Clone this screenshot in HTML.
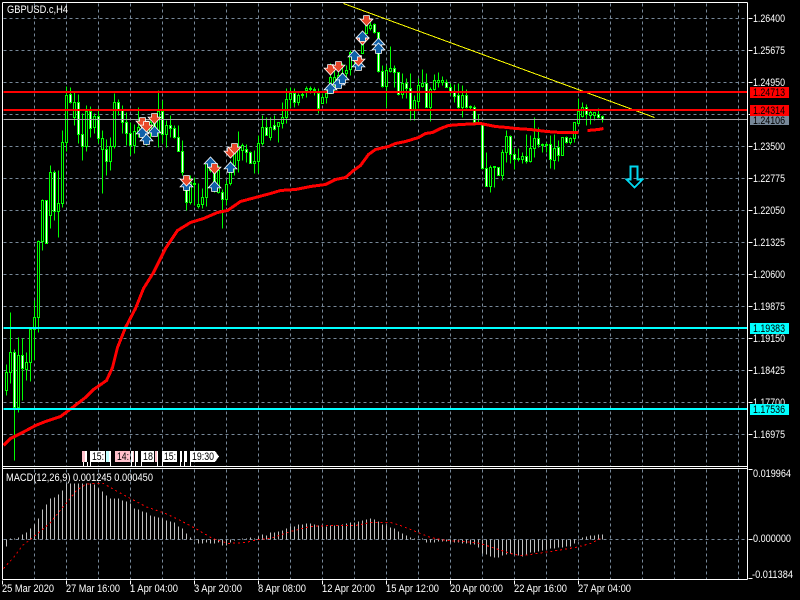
<!DOCTYPE html>
<html><head><meta charset="utf-8"><style>
html,body{margin:0;padding:0;background:#000;width:800px;height:600px;overflow:hidden}
svg{display:block}
text{font-family:"Liberation Sans",sans-serif;font-size:11px;fill:#fff}
text.k{fill:#000}
</style></head><body>
<svg width="800" height="600" viewBox="0 0 800 600" xmlns="http://www.w3.org/2000/svg">
<rect width="800" height="600" fill="#000"/>
<g transform="translate(.5 .5)" shape-rendering="crispEdges" fill="none">
<path stroke="#778899" stroke-dasharray="3 3" d="M34 3V466M66 3V466M98 3V466M130 3V466M162 3V466M194 3V466M226 3V466M258 3V466M290 3V466M322 3V466M354 3V466M386 3V466M418 3V466M450 3V466M482 3V466M514 3V466M546 3V466M578 3V466M610 3V466M642 3V466M674 3V466M706 3V466M738 3V466
M34 469V579M66 469V579M98 469V579M130 469V579M162 469V579M194 469V579M226 469V579M258 469V579M290 469V579M322 469V579M354 469V579M386 469V579M418 469V579M450 469V579M482 469V579M514 469V579M546 469V579M578 469V579M610 469V579M642 469V579M674 469V579M706 469V579M738 469V579
M3 18H747M3 50H747M3 82H747M3 114H747M3 146H747M3 178H747M3 210H747M3 242H747M3 274H747M3 306H747M3 338H747M3 370H747M3 402H747M3 434H747M3 539H747"/>
<path stroke="#00ff00" d="M6 364V395M10 312V383M14 349V460M18 337V412M22 338V400M26 352V380M30 329V381M34 300V360M38 240V332M42 199V250M46 200V243M50 165V228M54 170V220M58 170V237M62 130V207M66 86V151M70 87V103M74 92V125M78 94V143M82 113V160M86 105V151M90 106V137M94 113V133M98 108V143M102 130V193M106 139V175M110 137V170M114 93V148M118 99V115M122 105V133M126 112V145M130 122V155M134 124V153M138 107V137M142 120V140M146 125V145M150 120V140M154 115V135M158 90V147M162 100V143M166 120V147M170 115V137M174 125V138M178 125V151M182 140V175M186 177V210M190 175V204M194 177V205M198 183V208M202 188V208M206 163V206M210 160V172M214 170V192M218 165V193M222 189V228M226 180V205M230 160V185M234 145V175M238 131V172M242 143V160M246 144V162M250 151V163M254 150V173M258 135V173M262 115V145M266 117V135M270 117V140M274 115V130M278 122V142M282 102V128M286 88V123M290 87V107M294 88V107M298 93V105M302 92V98M306 86V97M310 86V93M314 87V95M318 88V113M322 93V103M326 88V103M330 63V93M334 68V92M338 72V83M342 63V82M346 65V78M350 50V75M354 52V65M358 57V68M362 42V53M366 15V33M370 22V30M374 23V33M378 32V72M382 65V87M386 65V107M390 46V72M394 65V87M398 72V95M402 73V98M406 78V98M410 73V120M414 95V120M418 78V108M422 69V87M426 73V107M430 87V121M434 74V90M438 72V87M442 76V85M446 79V87M450 83V95M454 84V102M458 83V108M462 85V117M466 89V108M470 105V110M474 105V122M478 114V123M482 123V169M486 152V186M490 165V192M494 166V187M498 167V175M502 149V180M506 130V162M510 135V163M514 148V169M518 148V161M522 152V163M526 134V163M530 135V162M534 117V157M538 127V147M542 143V152M546 142V152M550 135V168M554 134V169M558 140V161M562 137V155M566 136V143M570 137V144M574 122V142M578 98V125M582 102V117M586 104V125M590 109V124M594 112V120M598 108V118M602 115V122"/>
<path stroke="#00ff00" fill="#000" d="M5 372h2v18h-2zM9 352h2v20h-2zM17 355h2v52h-2zM25 362h2v7h-2zM29 329h2v33h-2zM33 317h2v12h-2zM37 241h2v76h-2zM41 200h2v41h-2zM49 172h2v43h-2zM57 203h2v8h-2zM61 142h2v61h-2zM65 95h2v47h-2zM73 102h2v15h-2zM85 111h2v35h-2zM93 116h2v11h-2zM101 138h2v11h-2zM109 146h2v15h-2zM113 102h2v44h-2zM133 131h2v14h-2zM137 127h2v4h-2zM141 123h2v8h-2zM149 122h2v8h-2zM157 111h2v19h-2zM165 125h2v9h-2zM189 182h2v20h-2zM193 183h2v1h-2zM197 204h2v2h-2zM201 197h2v7h-2zM205 163h2v34h-2zM217 170h2v22h-2zM225 184h2v15h-2zM229 167h2v16h-2zM233 150h2v15h-2zM237 148h2v12h-2zM241 145h2v5h-2zM253 161h2v2h-2zM257 143h2v18h-2zM261 127h2v16h-2zM269 127h2v10h-2zM277 122h2v4h-2zM281 117h2v6h-2zM285 99h2v18h-2zM289 93h2v6h-2zM297 95h2v7h-2zM301 94h2v1h-2zM305 88h2v2h-2zM309 88h2v1h-2zM313 89h2v1h-2zM321 97h2v6h-2zM325 93h2v4h-2zM329 77h2v16h-2zM333 77h2v6h-2zM337 75h2v7h-2zM341 73h2v5h-2zM345 70h2v3h-2zM349 52h2v17h-2zM361 33h2v20h-2zM365 23h2v10h-2zM369 25h2v3h-2zM385 70h2v16h-2zM389 68h2v3h-2zM401 83h2v11h-2zM413 100h2v9h-2zM417 85h2v16h-2zM421 83h2v3h-2zM429 89h2v18h-2zM433 80h2v9h-2zM437 80h2v2h-2zM441 80h2v2h-2zM461 95h2v12h-2zM469 106h2v1h-2zM489 167h2v19h-2zM493 166h2v1h-2zM501 152h2v23h-2zM505 136h2v16h-2zM517 158h2v1h-2zM521 156h2v3h-2zM529 148h2v13h-2zM533 138h2v10h-2zM541 144h2v1h-2zM545 144h2v1h-2zM553 148h2v12h-2zM561 137h2v18h-2zM569 138h2v4h-2zM573 122h2v16h-2zM577 111h2v12h-2zM581 107h2v9h-2zM589 112h2v3h-2zM593 112h2v3h-2z"/>
<path stroke="#00ff00" fill="#fff" d="M13 352h2v55h-2zM21 355h2v13h-2zM45 200h2v43h-2zM53 172h2v39h-2zM69 94h2v8h-2zM77 102h2v32h-2zM81 134h2v12h-2zM89 111h2v17h-2zM97 116h2v22h-2zM105 149h2v12h-2zM117 102h2v7h-2zM121 109h2v13h-2zM125 122h2v11h-2zM129 133h2v12h-2zM145 125h2v6h-2zM153 118h2v10h-2zM161 111h2v23h-2zM169 125h2v3h-2zM173 128h2v9h-2zM177 137h2v14h-2zM181 151h2v21h-2zM185 180h2v22h-2zM209 163h2v7h-2zM213 172h2v14h-2zM221 192h2v7h-2zM245 149h2v3h-2zM249 152h2v11h-2zM265 127h2v8h-2zM273 125h2v4h-2zM293 93h2v9h-2zM317 93h2v15h-2zM353 53h2v7h-2zM357 60h2v5h-2zM373 24h2v8h-2zM377 32h2v39h-2zM381 71h2v15h-2zM393 68h2v4h-2zM397 72h2v22h-2zM405 83h2v5h-2zM409 88h2v21h-2zM425 83h2v24h-2zM445 82h2v5h-2zM449 87h2v4h-2zM453 91h2v5h-2zM457 95h2v12h-2zM465 95h2v12h-2zM473 107h2v15h-2zM481 124h2v44h-2zM485 168h2v18h-2zM497 167h2v8h-2zM509 136h2v18h-2zM513 154h2v5h-2zM525 156h2v5h-2zM537 138h2v6h-2zM549 144h2v15h-2zM557 147h2v8h-2zM565 137h2v5h-2zM585 107h2v7h-2zM597 114h2v3h-2zM601 116h2v3h-2z"/>
<path stroke="#ff0000" stroke-width="3" stroke-linejoin="round" d="M3 445L10 438L22 432L35 425L45 421L60 416L72 407L85 397L93 389L106 380L112 367L117 347L125 327L135 308L143 288L153 272L165 248L177 230L190 222L203 218L217 212L227 210L240 201L255 197L270 193L280 190L295 189L310 186L325 184L335 179L345 177L353 170L360 165L368 154L375 149L388 146L395 143L405 141L418 137L425 133L432 132L440 128L448 125L460 124L480 123L485 124L495 126L507 127L515 128L530 129L546 131L560 132L578 132M587 130L598 129L603 128"/>
<path stroke="#ffff00" d="M343 3L654 117"/>
<path stroke="#ff0000" stroke-width="2" d="M3 91.500H747M3 109.500H747"/>
<path stroke="#a8a8a8" d="M3 119H747"/>
<path stroke="#00ffff" stroke-width="2" d="M3 327.500H747M3 408.500H747"/>
<path stroke="#00d8f0" stroke-width="2" d="M630 166H637V179H642L634 187L626 179H630Z"/>
<path stroke="#c0c0c0" d="M6 539V546M10 539V538M14 539V538M18 539V537M22 539V534M26 539V532M30 539V528M34 539V524M38 539V518M42 539V509M46 539V504M50 539V498M54 539V497M58 539V494M62 539V490M66 539V483M70 539V483M74 539V483M78 539V483M82 539V483M86 539V483M90 539V483M94 539V484M98 539V488M102 539V491M106 539V495M110 539V498M114 539V498M118 539V498M122 539V500M126 539V501M130 539V503M134 539V508M138 539V509M142 539V511M146 539V512M150 539V515M154 539V516M158 539V517M162 539V518M166 539V520M170 539V521M174 539V522M178 539V526M182 539V528M186 539V533M190 539V537M194 539V540M198 539V543M202 539V543M206 539V542M210 539V543M214 539V543M218 539V542M222 539V545M226 539V545M230 539V542M234 539V540M238 539V539M242 539V538M246 539V538M250 539V537M254 539V538M258 539V536M262 539V534M266 539V535M270 539V532M274 539V532M278 539V531M282 539V530M286 539V528M290 539V526M294 539V526M298 539V524M302 539V524M306 539V523M310 539V523M314 539V524M318 539V525M322 539V526M326 539V526M330 539V525M334 539V525M338 539V525M342 539V524M346 539V523M350 539V522M354 539V522M358 539V521M362 539V520M366 539V519M370 539V518M374 539V519M378 539V521M382 539V524M386 539V525M390 539V527M394 539V528M398 539V531M402 539V533M406 539V535M410 539V537M414 539V538M422 539V538M426 539V542M430 539V542M434 539V542M438 539V541M442 539V541M446 539V541M450 539V542M454 539V542M458 539V542M462 539V543M466 539V543M470 539V544M474 539V544M478 539V547M482 539V553M486 539V554M490 539V556M494 539V557M498 539V557M502 539V555M506 539V554M510 539V553M514 539V554M518 539V555M522 539V556M526 539V554M530 539V552M534 539V552M538 539V551M542 539V550M546 539V549M550 539V548M554 539V548M558 539V547M562 539V547M566 539V546M570 539V546M574 539V543M578 539V540M582 539V537M586 539V536M590 539V535M594 539V535M598 539V534M602 539V534"/>
<path stroke="#ff0000" stroke-dasharray="2 3" d="M3 568L13 557L22 545L30 539L42 529L50 522L58 512L68 500L76 490L85 484L92 483L103 483L115 490L130 498L145 506L165 513L180 520L195 528L212 538L228 543L245 542L258 539L270 538L290 531L310 526L330 525L355 525L370 522L390 522L400 525L415 531L430 537L445 540L465 541L480 543L495 548L510 553L520 555L530 554L550 551L575 547L590 543L600 538"/>
<path stroke="#ffffff" d="M2 2H747M2 2V579M747 2V579M2 466H747M2 468H747M2 579H747
M748 18H752M748 50H752M748 82H752M748 114H752M748 146H752M748 178H752M748 210H752M748 242H752M748 274H752M748 306H752M748 338H752M748 370H752M748 402H752M748 434H752M748 469H752M748 539H752M748 578H752
M2 580V584M66 580V584M130 580V584M194 580V584M258 580V584M322 580V584M386 580V584M450 580V584M514 580V584M578 580V584"/>
</g>
<defs>
<path id="d" d="M-2.500-4.500H2.500V-1H5.500L0 5L-5.500-1H-2.500Z" fill="#e8482a" stroke="#fff" stroke-width="1.600" paint-order="stroke"/>
<path id="u" d="M-2.500 4.500H2.500V1H5.500L0-5L-5.500 1H-2.500Z" fill="#1060a8" stroke="#fff" stroke-width="1.600" paint-order="stroke"/>
</defs>
<g>
<use href="#u" x="142.500" y="132.500"/><use href="#u" x="146.500" y="139.500"/><use href="#u" x="154.500" y="131.500"/>
<use href="#d" x="142.500" y="122.500"/><use href="#d" x="146.500" y="126.500"/><use href="#d" x="154.500" y="118.500"/>
<use href="#u" x="186.500" y="185.500"/><use href="#d" x="186.500" y="180.500"/>
<use href="#u" x="210.500" y="162.500"/><use href="#d" x="214.500" y="168.500"/><use href="#u" x="214.500" y="186.500"/>
<use href="#u" x="230.500" y="167.500"/><use href="#d" x="230.500" y="152.500"/><use href="#d" x="234.500" y="148.500"/>
<use href="#d" x="330.500" y="69.500"/><use href="#d" x="338.500" y="66.500"/>
<use href="#u" x="330.500" y="88.500"/><use href="#u" x="338.500" y="83.500"/><use href="#u" x="342.500" y="78.500"/>
<use href="#u" x="358.500" y="65.500"/><use href="#d" x="358.500" y="60.500"/><use href="#u" x="354.500" y="55.500"/>
<use href="#d" x="362.500" y="39.500"/><use href="#u" x="362.500" y="36.500"/><use href="#d" x="366.500" y="20.500"/>
<use href="#u" x="378.500" y="43.500"/><use href="#u" x="378.500" y="48.500"/>
</g>
<rect x="750" y="87" width="39" height="11" fill="#ff0000"/>
<rect x="750" y="105" width="39" height="11" fill="#ff0000"/>
<rect x="750" y="116" width="39" height="9" fill="#778899"/>
<rect x="750" y="323" width="39" height="11" fill="#00ffff"/>
<text x="753" y="22" textLength="32" lengthAdjust="spacingAndGlyphs">1.26400</text>
<text x="753" y="54" textLength="32" lengthAdjust="spacingAndGlyphs">1.25675</text>
<text x="753" y="86" textLength="32" lengthAdjust="spacingAndGlyphs">1.24950</text>
<text x="753" y="150" textLength="32" lengthAdjust="spacingAndGlyphs">1.23500</text>
<text x="753" y="182" textLength="32" lengthAdjust="spacingAndGlyphs">1.22775</text>
<text x="753" y="214" textLength="32" lengthAdjust="spacingAndGlyphs">1.22050</text>
<text x="753" y="246" textLength="32" lengthAdjust="spacingAndGlyphs">1.21325</text>
<text x="753" y="278" textLength="32" lengthAdjust="spacingAndGlyphs">1.20600</text>
<text x="753" y="310" textLength="32" lengthAdjust="spacingAndGlyphs">1.19875</text>
<text x="753" y="342" textLength="32" lengthAdjust="spacingAndGlyphs">1.19150</text>
<text x="753" y="374" textLength="32" lengthAdjust="spacingAndGlyphs">1.18425</text>
<text x="753" y="406" textLength="32" lengthAdjust="spacingAndGlyphs">1.17700</text>
<text x="753" y="438" textLength="32" lengthAdjust="spacingAndGlyphs">1.16975</text>
<rect x="750" y="404" width="39" height="11" fill="#00ffff"/>
<text class="k" x="753" y="96" textLength="32" lengthAdjust="spacingAndGlyphs">1.24713</text>
<text class="k" x="753" y="114" textLength="32" lengthAdjust="spacingAndGlyphs">1.24314</text>
<text class="k" x="753" y="124" textLength="32" lengthAdjust="spacingAndGlyphs">1.24106</text>
<text class="k" x="753" y="332" textLength="32" lengthAdjust="spacingAndGlyphs">1.19383</text>
<text class="k" x="753" y="413" textLength="32" lengthAdjust="spacingAndGlyphs">1.17536</text>
<text x="753" y="477" textLength="38" lengthAdjust="spacingAndGlyphs">0.019964</text>
<text x="753" y="542" textLength="38" lengthAdjust="spacingAndGlyphs">0.000000</text>
<text x="752" y="578" textLength="41" lengthAdjust="spacingAndGlyphs">-0.011384</text>
<text x="7" y="13" textLength="61" lengthAdjust="spacingAndGlyphs">GBPUSD.c,H4</text>
<text x="6" y="481" textLength="147" lengthAdjust="spacingAndGlyphs">MACD(12,26,9) 0.001245 0.000450</text>
<text x="2" y="592" textLength="52" lengthAdjust="spacingAndGlyphs">25 Mar 2020</text>
<text x="66" y="592" textLength="54" lengthAdjust="spacingAndGlyphs">27 Mar 16:00</text>
<text x="130" y="592" textLength="48" lengthAdjust="spacingAndGlyphs">1 Apr 04:00</text>
<text x="194" y="592" textLength="48" lengthAdjust="spacingAndGlyphs">3 Apr 20:00</text>
<text x="258" y="592" textLength="48" lengthAdjust="spacingAndGlyphs">8 Apr 08:00</text>
<text x="322" y="592" textLength="53" lengthAdjust="spacingAndGlyphs">12 Apr 20:00</text>
<text x="386" y="592" textLength="53" lengthAdjust="spacingAndGlyphs">15 Apr 12:00</text>
<text x="450" y="592" textLength="53" lengthAdjust="spacingAndGlyphs">20 Apr 00:00</text>
<text x="514" y="592" textLength="53" lengthAdjust="spacingAndGlyphs">22 Apr 16:00</text>
<text x="578" y="592" textLength="53" lengthAdjust="spacingAndGlyphs">27 Apr 04:00</text>
<g shape-rendering="crispEdges">
<path stroke="#fff" d="M83.500 462V466M87.500 462V466M90.500 462V466M110.500 462V466M131.500 462V466M135.500 462V466M141.500 462V466M157.500 462V466M162.500 462V466M180.500 462V466M184.500 462V466M190.500 462V466"/>
<rect x="82" y="451" width="3" height="11" fill="#ffc0cb"/><rect x="85" y="451" width="2" height="11" fill="#fff"/>
<rect x="90" y="451" width="15" height="11" fill="#fff"/>
<rect x="106" y="451" width="3" height="11" fill="#c0ffff"/><rect x="109" y="451" width="2" height="11" fill="#fff"/>
<rect x="115" y="451" width="15" height="11" fill="#ffc0cb"/>
<rect x="131" y="451" width="2" height="11" fill="#fff"/><rect x="133" y="451" width="1" height="11" fill="#ffc0cb"/>
<rect x="135" y="451" width="3" height="11" fill="#fff"/>
<rect x="141" y="451" width="13" height="11" fill="#fff"/>
<rect x="155" y="451" width="2" height="11" fill="#ffc0cb"/><rect x="157" y="451" width="1" height="11" fill="#fff"/>
<rect x="162" y="451" width="15" height="11" fill="#fff"/>
<rect x="180" y="451" width="2" height="11" fill="#fff"/><rect x="184" y="451" width="3" height="11" fill="#fff"/>
<path d="M190 451H215L219 456.500L215 462H190Z" fill="#fff"/>
</g>
<text class="k" x="92" y="460" textLength="12" lengthAdjust="spacingAndGlyphs">15:</text>
<text class="k" x="117" y="460" textLength="12" lengthAdjust="spacingAndGlyphs">14:</text>
<text class="k" x="143" y="460" textLength="10" lengthAdjust="spacingAndGlyphs">18</text>
<text class="k" x="164" y="460" textLength="12" lengthAdjust="spacingAndGlyphs">15:</text>
<text class="k" x="192" y="460" textLength="22" lengthAdjust="spacingAndGlyphs">19:30</text>
</svg>
</body></html>
